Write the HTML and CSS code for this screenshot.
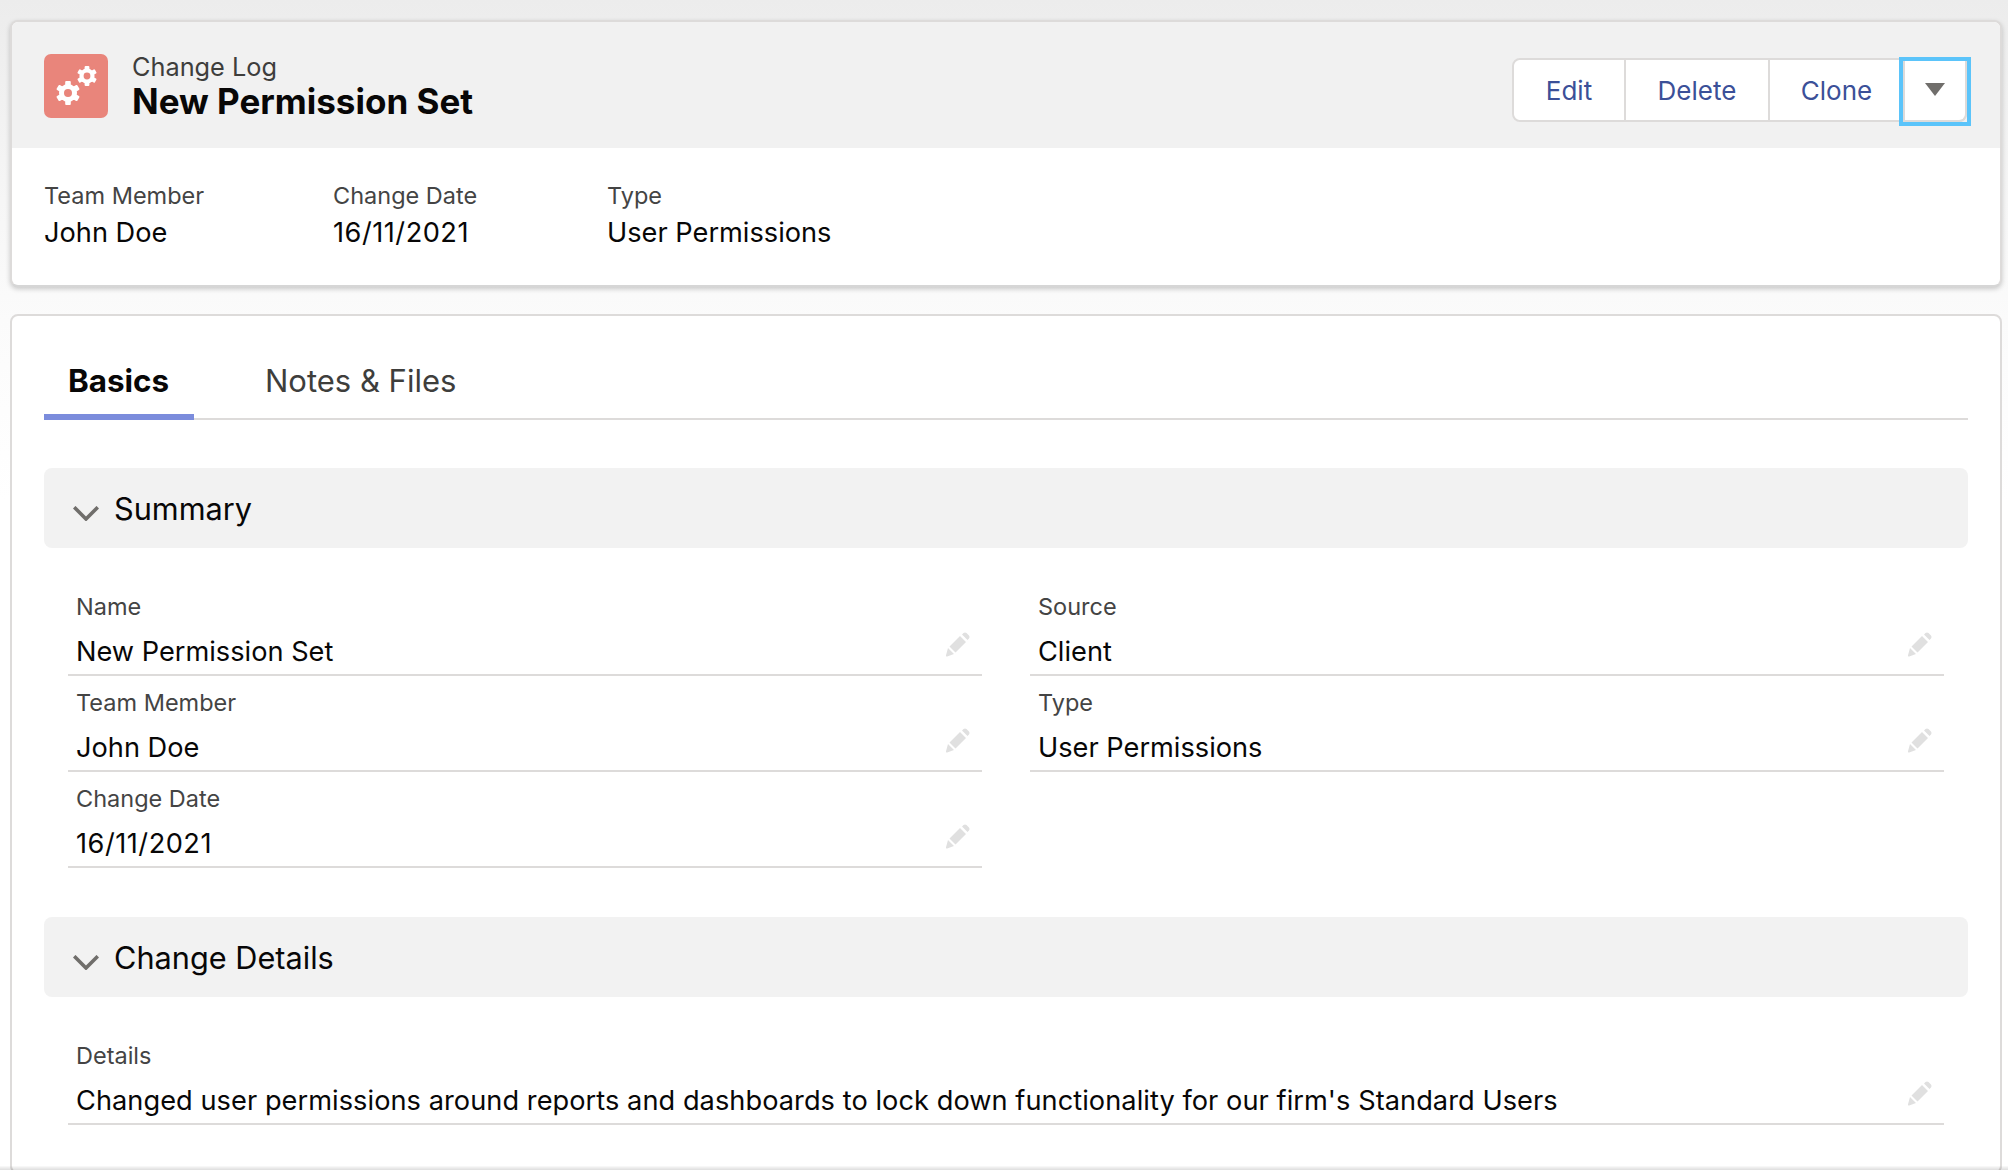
FILE: index.html
```html
<!DOCTYPE html>
<html lang="en">
<head>
<meta charset="utf-8">
<title>New Permission Set</title>
<link rel="stylesheet" href="styles.css">
</head>
<body>
<svg class="defs" width="0" height="0" aria-hidden="true">
  <defs>
    <symbol id="pencil" viewBox="0 0 26 26">
      <path d="M4.5 15.5 L15 5 L21 11 L10.5 21.5 Z M17 3.5 L18.5 2 Q20 .8 21.5 2 L24 4.5 Q25.2 6 24 7.5 L22.5 9 Z M3 17 L9 23 L2.2 25.4 Q.6 25.8 1 24.2 Z"/>
    </symbol>
    <symbol id="chevron" viewBox="0 0 26 15">
      <path d="M1.2 1.2 L13 13 L24.8 1.2" fill="none" stroke="#706e6b" stroke-width="3.6"/>
    </symbol>
  </defs>
</svg>
<main class="page">
  <section class="card highlights">
    <header class="hl-head">
      <div class="hl-title">
        <svg class="record-icon" viewBox="0 0 64 64" width="64" height="64">
          <rect width="64" height="64" rx="7" fill="#e9857b"/>
          <g fill="#fff">
            <g transform="translate(43 22)">
              <circle r="7.6"/>
              <rect x="-2.4" y="-10" width="4.8" height="20" rx="1"/>
              <rect x="-2.4" y="-10" width="4.8" height="20" rx="1" transform="rotate(60)"/>
              <rect x="-2.4" y="-10" width="4.8" height="20" rx="1" transform="rotate(120)"/>
              <circle r="3.4" fill="#e9857b"/>
            </g>
            <g transform="translate(24 39)">
              <circle r="9"/>
              <rect x="-2.8" y="-12" width="5.6" height="24" rx="1"/>
              <rect x="-2.8" y="-12" width="5.6" height="24" rx="1" transform="rotate(60)"/>
              <rect x="-2.8" y="-12" width="5.6" height="24" rx="1" transform="rotate(120)"/>
              <circle r="4" fill="#e9857b"/>
            </g>
          </g>
        </svg>
        <div class="hl-text">
          <div class="hl-object">Change Log</div>
          <h1 class="hl-name">New Permission Set</h1>
        </div>
      </div>
      <div class="btn-group">
        <button class="btn btn-edit">Edit</button>
        <button class="btn btn-delete">Delete</button>
        <button class="btn btn-clone">Clone</button>
        <button class="btn btn-more" aria-label="More actions">
          <span class="more-inner">
            <svg viewBox="0 0 20 13" width="20" height="13"><path d="M0 0 H20 L10 13 Z" fill="#706e6b"/></svg>
          </span>
        </button>
      </div>
    </header>
    <div class="hl-fields">
      <div class="hl-field hl-f1"><div class="hl-label">Team Member</div><div class="hl-value">John Doe</div></div>
      <div class="hl-field hl-f2"><div class="hl-label">Change Date</div><div class="hl-value date">16/11/2021</div></div>
      <div class="hl-field"><div class="hl-label">Type</div><div class="hl-value">User Permissions</div></div>
    </div>
  </section>

  <section class="card detail">
    <nav class="tabs">
      <a class="tab tab-active">Basics</a>
      <a class="tab tab-notes">Notes &amp; Files</a>
    </nav>

    <div class="section-head"><svg class="chevron"><use href="#chevron"/></svg><h2 class="section-title">Summary</h2></div>
    <div class="field-grid">
      <div class="field"><div class="field-text"><div class="field-label">Name</div><div class="field-value">New Permission Set</div></div><svg class="pencil"><use href="#pencil"/></svg></div>
      <div class="field"><div class="field-text"><div class="field-label">Source</div><div class="field-value">Client</div></div><svg class="pencil"><use href="#pencil"/></svg></div>
      <div class="field"><div class="field-text"><div class="field-label">Team Member</div><div class="field-value">John Doe</div></div><svg class="pencil"><use href="#pencil"/></svg></div>
      <div class="field"><div class="field-text"><div class="field-label">Type</div><div class="field-value">User Permissions</div></div><svg class="pencil"><use href="#pencil"/></svg></div>
      <div class="field"><div class="field-text"><div class="field-label">Change Date</div><div class="field-value date">16/11/2021</div></div><svg class="pencil"><use href="#pencil"/></svg></div>
    </div>

    <div class="section-head section-second"><svg class="chevron"><use href="#chevron"/></svg><h2 class="section-title">Change Details</h2></div>
    <div class="field-grid field-grid-one">
      <div class="field"><div class="field-text"><div class="field-label">Details</div><div class="field-value long">Changed user permissions around reports and dashboards to lock down functionality for our firm's Standard Users</div></div><svg class="pencil"><use href="#pencil"/></svg></div>
    </div>
  </section>
</main>
</body>
</html>
```
FILE: styles.css
```css
* { box-sizing: border-box; }
html, body { margin: 0; height: 100%; overflow: hidden; }
body {
  font-family: Inter, "Liberation Sans", sans-serif;
  color: #080707;
  background: linear-gradient(#ececec 0, #f6f6f6 200px, #fbfbfb 320px, #fff 500px);
}
body::after {
  content: ""; position: fixed; left: 0; right: 0; bottom: 0; height: 4px;
  background: linear-gradient(rgba(0,0,0,.02), rgba(0,0,0,.13));
}
.defs { position: absolute; }
.page { padding: 20px 6px 0 10px; display: flex; flex-direction: column; gap: 27px; height: 1170px; }
.card { background: #fff; border: 2px solid #dddbda; border-radius: 8px; }
.highlights { height: 267px; border-bottom-color: #d6d6d6; box-shadow: 0 2px 5px rgba(0,0,0,.2); }
.hl-head {
  height: 126px; background: #f1f1f1; border-radius: 6px 6px 0 0;
  display: flex; justify-content: space-between; align-items: flex-start;
  padding: 36px 33px 0 32px;
}
.hl-title { display: flex; gap: 24px; align-items: flex-start; margin-top: -4px; }
.record-icon { display: block; flex: none; }
.hl-text { margin-top: -4px; }
.hl-object { font-size: 25.3px; line-height: 33px; color: #3e3e3c; }
.hl-name { margin: 0; font-size: 35px; line-height: 36px; font-weight: 700; color: #080707; }
.btn-group { display: flex; height: 64px; border: 2px solid #dddbda; border-radius: 8px; background: #fff; }
.btn {
  font: 26px Inter, "Liberation Sans", sans-serif; color: #3b5098; background: #fff;
  border: 0; border-right: 2px solid #dddbda; padding: 0; display: flex; align-items: center; justify-content: center;
}
.btn-edit { width: 112px; border-radius: 8px 0 0 8px; }
.btn-delete { width: 144px; }
.btn-clone { width: 133px; border-right: 0; }
.btn-more {
  width: 64px; margin: 1px -2px -2px 0; border: 0; background: transparent;
  outline: 4px solid #5bc4fa; outline-offset: 0; align-items: stretch;
}
.more-inner {
  flex: 1; display: flex; align-items: flex-start; justify-content: center; padding-top: 22px;
  background: #fff; border: 2px solid #dddbda; border-top: 0; border-radius: 0 0 8px 0;
}
.hl-fields { display: flex; padding: 33px 0 0 32px; }
.hl-f1 { width: 289px; }
.hl-f2 { width: 274px; }
.hl-label { font-size: 23.5px; line-height: 30px; color: #444; }
.hl-value { font-size: 27.2px; line-height: 43px; color: #080707; }
.date { letter-spacing: .5px; }
.long { letter-spacing: .05px; }
.detail { flex: 1; margin-bottom: -4px; padding: 0 32px 0 32px; }
.tabs { display: flex; height: 104px; border-bottom: 2px solid #dddbda; align-items: stretch; }
.tab { font-size: 31px; line-height: 40px; padding: 45px 0 0; color: #3e3e3c; }
.tab-active { width: 150px; padding-left: 24px; font-size: 31.4px; font-weight: 700; color: #080707; border-bottom: 6px solid #7b8cdc; margin-bottom: -2px; }
.tab-notes { margin-left: 71px; }
.section-head {
  margin-top: 48px; height: 80px; background: #f2f2f2; border-radius: 8px;
  display: flex; align-items: center; padding-left: 29px;
}
.section-second { margin-top: 49px; }
.chevron { width: 26px; height: 15px; flex: none; margin-top: 11px; }
.section-title { margin: 2px 0 0 15px; font-size: 30.7px; line-height: 40px; font-weight: 400; color: #080707; }
.field-grid { display: grid; grid-template-columns: 914px 914px; column-gap: 48px; padding: 0 0 0 24px; margin-top: 32px; }
.field-grid-one { grid-template-columns: 1876px; }
.field { height: 96px; border-bottom: 2px solid #dddbda; display: flex; padding-left: 8px; }
.field-text { flex: 1; }
.field-label { font-size: 23.5px; line-height: 30px; margin-top: 12px; color: #444; }
.field-value { font-size: 27.2px; line-height: 36px; margin-top: 12px; color: #080707; white-space: nowrap; }
.pencil { width: 26px; height: 26px; flex: none; margin: 51px 11px 0 0; fill: #e0e0e0; }
```
